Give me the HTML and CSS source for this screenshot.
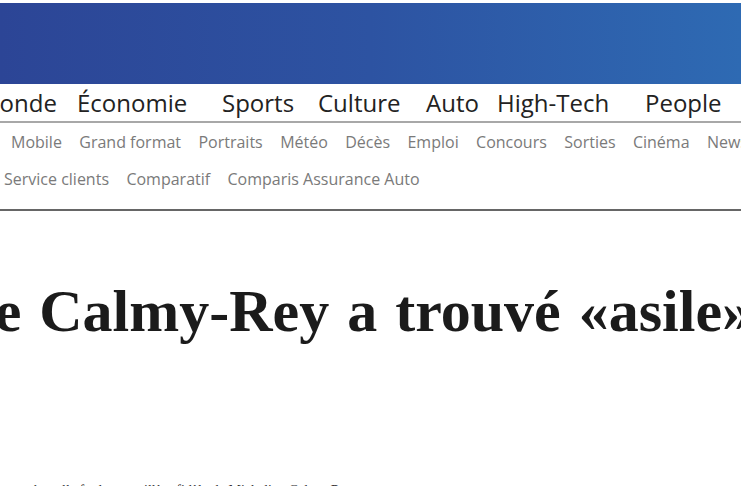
FILE: index.html
```html
<!DOCTYPE html>
<html lang="fr">
<head>
    <meta charset="UTF-8">
    <meta name="viewport" content="width=device-width, initial-scale=1.0">
    <title>Calmy-Rey a trouvé «asile»</title>
    <link rel="stylesheet" href="styles.css">
</head>
<body>
    <!-- Bandeau -->
    <header class="banner"></header>

    <!-- Rubriques principales -->
    <nav class="main-nav">
        <ul>
            <li>Monde</li>
            <li>Économie</li>
            <li>Sports</li>
            <li>Culture</li>
            <li>Auto</li>
            <li>High-Tech</li>
            <li>People</li>
        </ul>
    </nav>

    <!-- Liens secondaires -->
    <nav class="sub-nav">
        <ul class="row-first">
            <li>Mobile</li>
            <li>Grand format</li>
            <li>Portraits</li>
            <li>Météo</li>
            <li>Décès</li>
            <li>Emploi</li>
            <li>Concours</li>
            <li>Sorties</li>
            <li>Cinéma</li>
            <li>Newsletter</li>
        </ul>
        <ul class="row-second">
            <li>Service clients</li>
            <li>Comparatif</li>
            <li>Comparis Assurance Auto</li>
        </ul>
    </nav>

    <article class="article">
        <h1>Micheline Calmy-Rey a trouvé «asile»</h1>
        <p class="lead">Pendant des années, elle fut la conseillère fidèle de Micheline Calmy-Rey</p>
    </article>
</body>
</html>
```

FILE: styles.css
```css
html, body {
    margin: 0;
    padding: 0;
    background: #fff;
    overflow: hidden;
}

body {
    font-family: "Open Sans", Arial, sans-serif;
    color: #222;
}

ul {
    list-style: none;
    margin: 0;
    padding: 0;
}

.banner {
    height: 81px;
    margin-top: 3px;
    background: linear-gradient(90deg, #2c4596 0%, #2d53a2 50%, #2e6ab3 100%);
}

.main-nav {
    border-bottom: 2px solid #a8a8a8;
}

.main-nav ul {
    display: grid;
    grid-template-columns: 99px 145px 96px 108px 71px 148px auto;
    margin-left: -22px;
    font-size: 24px;
    line-height: 37px;
    white-space: nowrap;
}

.sub-nav {
    padding-top: 1px;
    padding-bottom: 11px;
    border-bottom: 2px solid #666;
    font-size: 16px;
    line-height: 37px;
    color: #7a7a7a;
}

.sub-nav ul {
    display: flex;
    gap: 17.4px;
    white-space: nowrap;
}

.row-first {
    padding-left: 11px;
}

.row-second {
    padding-left: 4px;
    gap: 19px;
}

.article h1 {
    margin: 64px 0 0 -232px;
    font-family: "Liberation Serif", "Times New Roman", serif;
    font-weight: bold;
    font-size: 60px;
    line-height: 72px;
    word-spacing: 3px;
    color: #1b1b1b;
    white-space: nowrap;
}

.lead {
    margin: 134px 0 0 -60px;
    font-family: "Liberation Serif", "Times New Roman", serif;
    font-size: 14px;
    line-height: 20px;
    color: #333;
    white-space: nowrap;
}
```
